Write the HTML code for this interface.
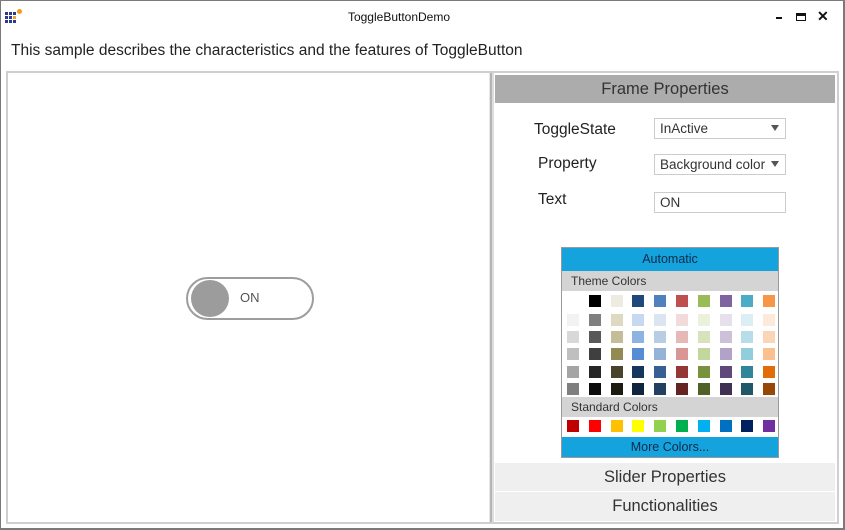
<!DOCTYPE html>
<html><head><meta charset="utf-8">
<style>
*{margin:0;padding:0;box-sizing:border-box}
body{width:845px;height:530px;background:#fff;position:relative;overflow:hidden;font-family:"Liberation Sans",sans-serif;color:#222}
.a{position:absolute}
.lbl{font-size:15.5px;color:#222}
.dd{position:absolute;left:654px;width:132px;height:21px;border:1px solid #ccc;background:#fff;font-size:13.5px;padding:2px 0 0 5px;color:#333;white-space:nowrap}
.dd .ar{position:absolute;right:6px;top:6px;width:0;height:0;border-left:4px solid transparent;border-right:4px solid transparent;border-top:6px solid #555}
.hdr{position:absolute;left:495px;width:340px;text-align:center;font-size:16.5px;color:#333}
.ic{position:absolute;width:3px;height:3px;background:#2b3a8c}
</style></head><body>
<div class="a" style="left:0;top:0;width:845px;height:530px;border:1px solid #7a7a7a;border-right:2px solid #7a7a7a;border-bottom:2px solid #7a7a7a"></div>
<!-- app icon -->
<div class="ic" style="left:5px;top:12px"></div><div class="ic" style="left:9px;top:12px"></div><div class="ic" style="left:13px;top:12px"></div>
<div class="ic" style="left:5px;top:16px"></div><div class="ic" style="left:9px;top:16px"></div><div class="ic" style="left:13px;top:16px;background:#f0a030"></div>
<div class="ic" style="left:5px;top:20px"></div><div class="ic" style="left:9px;top:20px"></div><div class="ic" style="left:13px;top:20px"></div>
<div class="a" style="left:17px;top:9px;width:5px;height:5px;border-radius:50%;background:#f39a1e"></div>
<div class="a" style="left:299px;top:10px;width:200px;text-align:center;font-size:12px;color:#111">ToggleButtonDemo</div>
<div class="a" style="left:776px;top:17px;width:6px;height:2px;background:#111"></div>
<div class="a" style="left:796px;top:13px;width:10px;height:8px;border:1px solid #111;border-top:3px solid #111"></div>
<div class="a" style="left:817px;top:8px;font-size:14px;font-weight:bold;color:#111">✕</div>
<div class="a" style="left:11px;top:42px;font-size:15.5px;color:#222;white-space:nowrap">This sample describes the characteristics and the features of ToggleButton</div>
<!-- main box -->
<div class="a" style="left:6px;top:71px;width:833px;height:453px;border:2px solid #cfcfcf"></div>
<div class="a" style="left:489px;top:73px;width:5px;height:449px;background:#ddd;border-left:1px solid #e6e6e6"></div>
<div class="a" style="left:490px;top:73px;width:2px;height:449px;background:#b5b5b5"></div>
<!-- toggle -->
<div class="a" style="left:186px;top:277px;width:128px;height:43px;border:2px solid #9d9d9d;border-radius:22px"></div>
<div class="a" style="left:191px;top:280px;width:38px;height:37px;border-radius:50%;background:#9c9c9c"></div>
<div class="a" style="left:240px;top:290px;font-size:13px;color:#555">ON</div>
<!-- right panel -->
<div class="hdr" style="top:75px;height:28px;background:#acacac;line-height:28px">Frame Properties</div>
<div class="a lbl" style="left:534px;top:121px">ToggleState</div>
<div class="a lbl" style="left:538px;top:155px">Property</div>
<div class="a lbl" style="left:538px;top:191px">Text</div>
<div class="dd" style="top:118px">InActive<span class="ar"></span></div>
<div class="dd" style="top:154px">Background color<span class="ar"></span></div>
<div class="dd" style="top:192px">ON</div>
<!-- picker -->
<div class="a" style="left:561px;top:247px;width:218px;height:211px;border:1px solid #9a9a9a;background:#fff"></div>
<div class="a" style="left:562px;top:248px;width:216px;height:23px;background:#14a3dd;text-align:center;font-size:12.5px;line-height:23px;color:#0d2b4a">Automatic</div>
<div class="a" style="left:562px;top:271px;width:216px;height:20px;background:#d4d4d4;font-size:12px;line-height:20px;padding-left:9px;color:#333">Theme Colors</div>
<div class="a" style="left:562px;top:397px;width:216px;height:20px;background:#d4d4d4;font-size:12px;line-height:20px;padding-left:9px;color:#333">Standard Colors</div>
<div class="a" style="left:562px;top:437px;width:216px;height:20px;background:#14a3dd;text-align:center;font-size:12.5px;line-height:20px;color:#0d2b4a">More Colors...</div>
<div class="a" style="left:567px;top:295px;display:grid;grid-template-columns:repeat(10,12px);column-gap:9.8px;grid-template-rows:12px">
<div style="height:12px;background:#FFFFFF"></div><div style="background:#000000"></div><div style="background:#EEECE1"></div><div style="background:#1F497D"></div><div style="background:#4F81BD"></div><div style="background:#C0504D"></div><div style="background:#9BBB59"></div><div style="background:#8064A2"></div><div style="background:#4BACC6"></div><div style="background:#F79646"></div>
</div>
<div class="a" style="left:567px;top:314px;display:grid;grid-template-columns:repeat(10,12px);grid-auto-rows:12px;column-gap:9.8px;row-gap:5.2px">
<div style="background:#F2F2F2"></div><div style="background:#7F7F7F"></div><div style="background:#DDD9C3"></div><div style="background:#C6D9F0"></div><div style="background:#DBE5F1"></div><div style="background:#F2DCDB"></div><div style="background:#EBF1DD"></div><div style="background:#E5E0EC"></div><div style="background:#DBEEF3"></div><div style="background:#FDEADA"></div>
<div style="background:#D8D8D8"></div><div style="background:#595959"></div><div style="background:#C4BD97"></div><div style="background:#8DB3E2"></div><div style="background:#B8CCE4"></div><div style="background:#E5B9B7"></div><div style="background:#D7E3BC"></div><div style="background:#CCC1D9"></div><div style="background:#B7DDE8"></div><div style="background:#FBD5B5"></div>
<div style="background:#BFBFBF"></div><div style="background:#3F3F3F"></div><div style="background:#938953"></div><div style="background:#548DD4"></div><div style="background:#95B3D7"></div><div style="background:#D99694"></div><div style="background:#C3D69B"></div><div style="background:#B2A2C7"></div><div style="background:#92CDDC"></div><div style="background:#FAC08F"></div>
<div style="background:#A5A5A5"></div><div style="background:#262626"></div><div style="background:#494429"></div><div style="background:#17365D"></div><div style="background:#366092"></div><div style="background:#953734"></div><div style="background:#76923C"></div><div style="background:#5F497A"></div><div style="background:#31859B"></div><div style="background:#E36C09"></div>
<div style="background:#7F7F7F"></div><div style="background:#0C0C0C"></div><div style="background:#1D1B10"></div><div style="background:#0F243E"></div><div style="background:#244061"></div><div style="background:#632423"></div><div style="background:#4F6128"></div><div style="background:#3F3151"></div><div style="background:#205867"></div><div style="background:#974806"></div>
</div>
<div class="a" style="left:567px;top:420px;display:grid;grid-template-columns:repeat(10,12px);grid-auto-rows:12px;column-gap:9.8px">
<div style="background:#C00000"></div><div style="background:#FF0000"></div><div style="background:#FFC000"></div><div style="background:#FFFF00"></div><div style="background:#92D050"></div><div style="background:#00B050"></div><div style="background:#00B0F0"></div><div style="background:#0070C0"></div><div style="background:#002060"></div><div style="background:#7030A0"></div>
</div>
<div class="hdr" style="top:463px;height:28px;background:#efefef;line-height:28px">Slider Properties</div>
<div class="hdr" style="top:492px;height:29px;background:#efefef;line-height:29px">Functionalities</div>
</body></html>
